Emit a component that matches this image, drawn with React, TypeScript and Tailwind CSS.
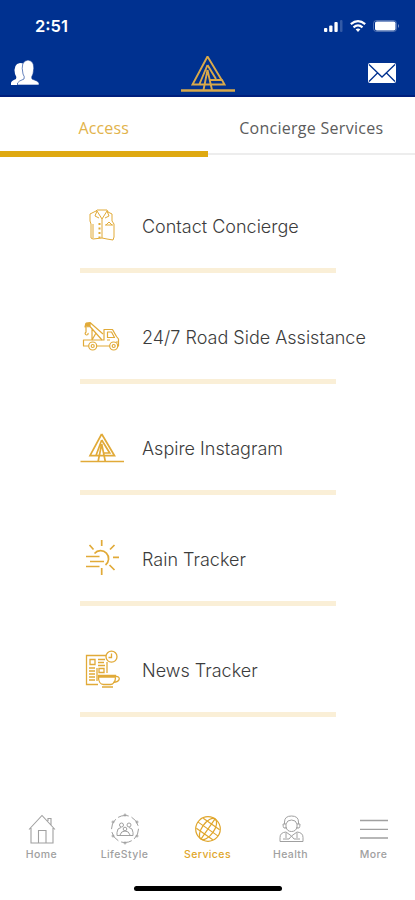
import React from 'react';

interface IconProps {
  className?: string;
}

function AspireLogo({ className }: IconProps) {
  return (
    <svg viewBox="0 0 54 40" className={className} fill="none" stroke="currentColor" strokeWidth="1.9">
      <path d="M26.500 3.500L11.500 31.500H43.500L41 27H29M26.500 3.500L41 27.500M26.500 12L18.500 31M26.500 12L35 26M26.500 17L22.500 37M26.500 17L31 37" />
      <path d="M0 37.500h54" strokeWidth="2.400" />
    </svg>
  );
}

function VestIcon() {
  return (
    <svg viewBox="0 0 44 44" className="h-11 w-11" fill="none" stroke="currentColor" strokeWidth="1">
      <path d="M17 6h10l1 2 4 2v7l2 3v13l-1 3-6-1-5-1-9 1-2-1V20l-1-3V10l6-3zM17 7l5 8 5-8M17 7l-2 5 4 2M27 7l2 5-4 2M22 15v19M13 20v14M25 21h8M26 21l3-3 3 3" />
      <path d="M19.500 19v15" strokeDasharray="2 2.500" strokeWidth="2" />
    </svg>
  );
}

function TowTruckIcon() {
  return (
    <svg viewBox="0 0 44 44" className="h-11 w-11" fill="none" stroke="currentColor" strokeWidth="1.200" strokeLinejoin="round">
      <path d="M8.500 31H3.500v-6H24V14.500h8.500l4 7 2 2.500v7h-1M17 31h13M27.500 17h4l3 5.500h-7zM27 25h3M36 27h2" />
      <path d="M6 8l4-.5L23 19M10 7.500v4L22 25M6 8l-1 4 5-.5M6 12v5q-2 2 .5 3 2 0 1.500-2M12 14v11M12 25l4-7" />
      <path d="M6.500 8.500h3v2.500h-3z" fill="currentColor" />
      <circle cx="12.700" cy="31" r="4" />
      <circle cx="12.700" cy="31" r="1.500" />
      <circle cx="33.700" cy="31" r="4" />
      <circle cx="33.700" cy="31" r="1.500" />
    </svg>
  );
}

function SunIcon() {
  return (
    <svg viewBox="0 0 44 44" className="h-11 w-11" fill="none" stroke="currentColor" strokeWidth="1.700">
      <path d="M14.500 16.500a8 8 0 1 1 11 11.500M21.700 3v6M21.700 31v7M33 20.300h6M9.500 8l4 4.500M34.500 8L30 12.500M29.500 28l5 5" />
      <path d="M6 19.500h13.500M10 24.500h14M6 29.500h13.500" strokeWidth="1.400" />
    </svg>
  );
}

function NewsIcon() {
  return (
    <svg viewBox="0 0 44 44" className="h-11 w-11" fill="none" stroke="currentColor" strokeWidth="1.300">
      <path d="M18 36.500H6.500V7.500H26M27 14v11M10 11.500h5v5h-5zM18 11.500h7M18 14.500h6M18 17.500h7M9 20h6M9 23h6M9 26h6M9 29h6M9 32h6M17 20v13M19 20.500h5v4h-5z" />
      <circle cx="31.500" cy="8.700" r="5.500" />
      <path d="M31.500 5.500v4h-3M18.500 27.500h17v2c0 5-3 7-5 7h-7c-3 0-5-3-5-7zM18.500 29h17M35 28.500c6-1 6 5.500-2 6M22 39h11" />
    </svg>
  );
}

function LogoRowIcon() {
  return (
    <svg viewBox="0 0 44 44" className="h-11 w-11" fill="none" stroke="currentColor" strokeWidth="1.700">
      <path d="M21.700 8L10 29.700H34.500L21.700 8M21.700 14L16 29.500M21.700 14l8 13H24M21.700 18l-3.500 17M21.700 18l3.500 17M.5 35.500h43.500" />
    </svg>
  );
}

function HomeIcon() {
  return (
    <svg viewBox="0 0 32 32" className="h-8 w-8" fill="none" stroke="currentColor" strokeWidth="1.100">
      <path d="M3 16.500L16 2.500l13 14M5 15v15h22V15M12.500 30V17.500h7.500V30M22 8V5.500h3V12" />
    </svg>
  );
}

function LifeStyleIcon() {
  return (
    <svg viewBox="0 0 32 32" className="h-8 w-8" fill="none" stroke="currentColor" strokeWidth="1">
      <circle cx="16" cy="16" r="13.500" strokeDasharray="11 3" />
      <circle cx="12.500" cy="12" r="2" />
      <circle cx="20" cy="12" r="2" />
      <circle cx="16" cy="16" r="1.800" />
      <path d="M8 22.500v-3q0-4.500 4-5M24 22.500v-3q0-4.500-4-5M8 22.500h16M11 22q1-4 5-4t5 4" />
      <circle cx="16" cy="2" r="1" />
      <circle cx="16" cy="30" r="1" />
      <circle cx="4" cy="9" r="1" />
      <circle cx="28" cy="9" r="1" />
      <circle cx="4" cy="23" r="1" />
      <circle cx="28" cy="23" r="1" />
    </svg>
  );
}

function GlobeIcon() {
  return (
    <svg viewBox="0 0 32 32" className="h-8 w-8" fill="none" stroke="currentColor" strokeWidth="1.200">
      <circle cx="16" cy="16" r="12.300" />
      <g transform="rotate(35 16 16)">
        <ellipse cx="16" cy="16" rx="6" ry="12.300" />
        <path d="M16 4v24M4 16h24M6 10h20M6 22h20" />
      </g>
    </svg>
  );
}

function HealthIcon() {
  return (
    <svg viewBox="0 0 32 32" className="h-8 w-8" fill="none" stroke="currentColor" strokeWidth="1">
      <path d="M9.500 11V9q0-6 7-6t7 6v2M11 11q1-4 5.500-4t5.500 4M8 11h3v4H9q-1-1-1-4zM25 11h-3v4h2q1-1 1-4zM11 14q1 4.500 5.500 4.500T22 14" />
      <path d="M5 28.500v-4q0-5 6-5.500l5.500 4 5.500-4q6 .5 6 5.500v4zM11 20v5M22 20v5M8 26h6M19 26h6M14 26l2.500-3 2.500 3" />
    </svg>
  );
}

function MenuIcon() {
  return (
    <svg viewBox="0 0 32 32" className="h-8 w-8" fill="none" stroke="currentColor" strokeWidth="1.300">
      <path d="M2 7.500h28M2 16.300h28M2 25h28" />
    </svg>
  );
}

const services = [
  { label: 'Contact Concierge', icon: VestIcon },
  { label: '24/7 Road Side Assistance', icon: TowTruckIcon },
  { label: 'Aspire Instagram', icon: LogoRowIcon },
  { label: 'Rain Tracker', icon: SunIcon },
  { label: 'News Tracker', icon: NewsIcon },
];

const navItems = [
  { label: 'Home', icon: HomeIcon },
  { label: 'LifeStyle', icon: LifeStyleIcon },
  { label: 'Services', icon: GlobeIcon, active: true },
  { label: 'Health', icon: HealthIcon },
  { label: 'More', icon: MenuIcon },
];

function StatusBar() {
  return (
    <div className="flex h-[50px] items-center justify-between pt-[2px] pr-[15px] pl-[35px] text-white">
      <span className="text-[16.500px] leading-none font-semibold">2:51</span>
      <div className="flex items-center gap-[7px]">
        <svg viewBox="0 0 19 12" className="h-3 w-[19px]" fill="currentColor">
          <rect x="0" y="8" width="3.300" height="4" rx="1" />
          <rect x="5.200" y="5.500" width="3.300" height="6.500" rx="1" />
          <rect x="10.400" y="2" width="3.300" height="10" rx="1" />
          <rect x="16" y="0" width="2.500" height="12" rx="1" opacity="0.200" />
        </svg>
        <svg viewBox="0 0 16 12" className="h-3 w-4" fill="none" stroke="currentColor" strokeWidth="2.200">
          <path d="M.8 4.200q7.200-6 14.400 0M3.500 7.300q4.500-3.700 9 0" />
          <path d="M5.600 9.300q2.400-1.700 4.800 0L8 12z" fill="currentColor" stroke="none" />
        </svg>
        <svg viewBox="0 0 27 12" className="h-3 w-[27px]" fill="currentColor">
          <rect x=".5" y=".5" width="23" height="11" rx="3" fill="none" stroke="currentColor" opacity="0.300" />
          <rect x="2" y="1.500" width="20.500" height="9" rx="1.800" />
          <path d="M25 4q2 2 0 4z" opacity="0.500" />
        </svg>
      </div>
    </div>
  );
}

function Header() {
  return (
    <div className="grid h-[45px] grid-cols-3 items-center text-white">
      <svg viewBox="0 0 28 28" className="mb-[1px] ml-[11px] h-7 w-7" fill="currentColor">
        <path d="M0 27v-2q0-2 5-4 1-2-1-5-2-10 5-11 5 0 5 3-3 5 0 9l1 3-4 3-3 2v2z" />
        <path d="M6.500 27v-2q1-2 6.500-4 1-2-1-5-3-13 5-14 8 1 5 14-2 3-1 5 6 2 7 4v2z" stroke="#003190" strokeWidth=".6" />
      </svg>
      <AspireLogo className="ml-[2px] h-10 w-[54px] justify-self-center text-[#d9a94a]" />
      <svg viewBox="0 0 28 20" className="mr-[19px] h-5 w-7 justify-self-end">
        <rect width="28" height="20" rx="2" fill="currentColor" />
        <path d="M1 1.500l13 12.500 13-12.500M1 18.500l8.500-8.500M27 18.500l-8.500-8.500" fill="none" stroke="#003190" strokeWidth="1.300" />
      </svg>
    </div>
  );
}

export default function App() {
  return (
    <div className="relative flex h-[900px] w-[415px] flex-col overflow-hidden bg-white font-['Inter',sans-serif]">
      <header className="h-[97px] shrink-0 border-b-2 border-[#001f7d] bg-[#003190]">
        <StatusBar />
        <Header />
      </header>

      <div className="grid h-[60px] shrink-0 grid-cols-2 text-center font-['Open_Sans',sans-serif] text-[16px]">
        <div className="flex items-center justify-center border-b-[6px] border-[#dfa911] pt-[7px] tracking-[0.150px] text-[#e2b34b]">
          Access
        </div>
        <div className="mb-[2px] flex items-center justify-center border-b-2 border-[#ededed] pt-[5px] tracking-[0.280px] text-[#5c5c5c]">
          Concierge Services
        </div>
      </div>

      <main className="flex flex-1 flex-col gap-[42px] pt-[47px] pl-20">
        {services.map(({ label, icon: Icon }) => (
          <div key={label} className="h-[69px]">
            <div className="flex h-11 items-center gap-[18px] text-[#e1aa38]">
              <Icon />
              <span className="text-[18px] font-light whitespace-nowrap text-[#3c3c3c]">{label}</span>
            </div>
            <div className="mt-[20px] h-[5px] w-[256px] bg-[#faefd7]" />
          </div>
        ))}
      </main>

      <nav className="grid h-[87px] shrink-0 grid-cols-5">
        {navItems.map(({ label, icon: Icon, active }) => (
          <div
            key={label}
            className={`flex flex-col items-center ${active ? 'text-[#e0a62c]' : 'text-[#a0a0a0]'}`}
          >
            <Icon />
            <span className="mt-[3px] text-[10.500px] leading-[14px] font-medium tracking-[0.400px]">{label}</span>
          </div>
        ))}
      </nav>
      <div className="absolute top-[886px] left-[134px] h-[5px] w-[148px] rounded-full bg-black" />
    </div>
  );
}
